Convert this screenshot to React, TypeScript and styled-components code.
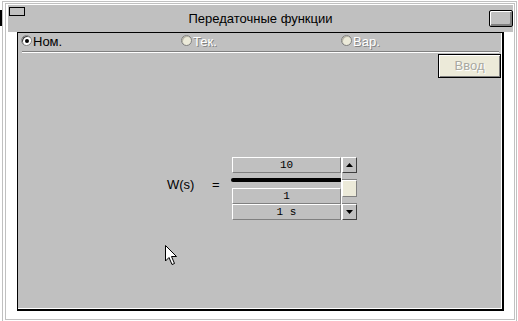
import React from 'react'
import styled, { createGlobalStyle } from 'styled-components'

const GRAY = '#c0c0c0'
const DARK = '#808080'
const BEIGE = '#ecead9'

const GlobalStyle = createGlobalStyle`
  html, body {
    margin: 0;
    padding: 0;
    background: #fff;
  }
  * {
    box-sizing: border-box;
  }
`

const Screen = styled.div`
  position: relative;
  width: 518px;
  height: 321px;
  padding-top: 1px;
  display: flex;
  background: #fff;
  font-family: "Liberation Sans", Arial, sans-serif;
  overflow: hidden;
`

const LeftTab = styled.div`
  width: 2px;
  height: 16px;
  margin-top: 9px;
  background: #000;
`

const Frame = styled.div`
  width: 515px;
  height: 320px;
  border: 1px solid ${GRAY};
  border-bottom: none;
  padding: 1px 1px 0 2px;
`

const Inner = styled.div`
  width: 510px;
  height: 317px;
  border: 1px solid ${GRAY};
  padding: 1px 1px 0 2px;
  display: flex;
  flex-direction: column;
`

const TitleBar = styled.div`
  height: 27px;
  background: ${GRAY};
  display: grid;
  grid-template-columns: 1fr auto 1fr;
  align-items: center;
`

const SysIcon = styled.div`
  justify-self: start;
  align-self: start;
  margin: 2px 0 0 1px;
  width: 16px;
  height: 9px;
  border: 1px solid #000;
`

const Title = styled.div`
  font-size: 13px;
  color: #000;
  padding-bottom: 1px;
`

const MaxButton = styled.div`
  justify-self: end;
  align-self: start;
  margin-top: 5px;
  width: 24px;
  height: 17px;
  background: ${GRAY};
  border: 1px solid #000;
  border-radius: 2px;
  box-shadow: inset 1px 1px 0 #fff, inset -2px -2px 0 ${DARK};
`

const Body = styled.div`
  flex: 1;
  padding-left: 9px;
`

const Panel = styled.div`
  width: 487px;
  height: 279px;
  background: ${GRAY};
  border: 1px solid #000;
  border-right-width: 2px;
  border-bottom-width: 2px;
  box-shadow: inset -1px -1px 0 #fff;
  display: flex;
  flex-direction: column;
`

const RadioRow = styled.div`
  height: 18px;
  padding-left: 3px;
  display: grid;
  grid-template-columns: 160px 160px 160px;
`

const RadioItem = styled.label<{ disabled?: boolean }>`
  display: flex;
  align-items: flex-start;
  gap: 1px;
  font-size: 13px;
  line-height: 18px;
  color: ${({ disabled }) => (disabled ? '#fff' : '#000')};
  text-shadow: ${({ disabled }) => (disabled ? `1px 1px 0 ${DARK}` : 'none')};
`

const RadioDot = styled.span<{ checked?: boolean; disabled?: boolean }>`
  position: relative;
  flex: none;
  width: 11px;
  height: 11px;
  margin-top: 2px;
  border-radius: 50%;
  background: ${({ disabled }) => (disabled ? BEIGE : '#fff')};
  border: 1px solid ${DARK};
  box-shadow: inset 1px 1px 0 ${({ disabled }) => (disabled ? '#b8b6a8' : '#404040')};

  &::after {
    content: '';
    display: ${({ checked }) => (checked ? 'block' : 'none')};
    position: absolute;
    left: 3px;
    top: 3px;
    width: 4px;
    height: 4px;
    border-radius: 50%;
    background: #000;
  }
`

const Separator = styled.div`
  margin: 0 3px 0 4px;
  border-top: 1px solid ${DARK};
  border-bottom: 1px solid #fff;
`

const ButtonRow = styled.div`
  margin-top: 1px;
  padding-right: 1px;
  display: flex;
  justify-content: flex-end;
`

const EnterButton = styled.button`
  width: 63px;
  height: 24px;
  padding: 0 0 2px;
  background: ${BEIGE};
  border: 1px solid #000;
  box-shadow: inset 1px 1px 0 #fff, inset -1px -1px 0 ${DARK};
  font-family: "Liberation Sans", Arial, sans-serif;
  font-size: 13px;
  color: #a8a8a0;
  text-shadow: 1px 1px 0 #fff;
`

const FormulaRow = styled.div`
  margin-top: 79px;
  padding-left: 149px;
  display: grid;
  grid-template-columns: 45px 19px 110px 16px;
  align-items: start;
`

const Label = styled.div`
  margin-top: 20px;
  font-size: 13px;
  color: #000;
`

const Fraction = styled.div`
  display: flex;
  flex-direction: column;
`

const ValueBox = styled.div<{ gapTop?: number }>`
  margin: ${({ gapTop }) => gapTop || 0}px 0 0 1px;
  width: 109px;
  height: 16px;
  background: ${GRAY};
  border-top: 1px solid #fff;
  border-left: 1px solid #fff;
  border-right: 1px solid ${DARK};
  border-bottom: 1px solid ${DARK};
  font-family: "Liberation Mono", "Courier New", monospace;
  font-size: 11px;
  line-height: 14px;
  text-align: center;
  color: #000;
  white-space: pre;
`

const Bar = styled.div`
  margin-top: 5px;
  width: 111px;
  height: 4px;
  background: #000;
  border-radius: 2px;
`

const ScrollBar = styled.div`
  width: 16px;
  height: 63px;
  display: flex;
  flex-direction: column;
  background: ${GRAY};
  border-left: 1px solid #fff;
`

const ArrowBtn = styled.div`
  height: 16px;
  display: flex;
  align-items: center;
  justify-content: center;
  background: ${GRAY};
  border-top: 1px solid #fff;
  border-left: 1px solid #fff;
  border-right: 1px solid #404040;
  border-bottom: 1px solid #404040;
`

const Track = styled.div<{ size: number }>`
  height: ${({ size }) => size}px;
  background: ${GRAY};
  border-bottom: 1px solid ${DARK};
`

const Thumb = styled.div`
  height: 17px;
  background: ${BEIGE};
  border-top: 1px solid #fff;
  border-left: 1px solid #fff;
  border-right: 1px solid ${DARK};
  border-bottom: 1px solid ${DARK};
`

const Cursor = styled.svg`
  position: absolute;
  left: 164px;
  top: 244px;
`

const Triangle = ({ down }: { down?: boolean }) => (
  <svg width="7" height="4" viewBox="0 0 7 4">
    <polygon points={down ? '0,0 7,0 3.5,4' : '3.5,0 7,4 0,4'} fill="#000" />
  </svg>
)

export default function App() {
  return (
    <Screen>
      <GlobalStyle />
      <LeftTab />
      <Frame>
        <Inner>
          <TitleBar>
            <SysIcon />
            <Title>Передаточные функции</Title>
            <MaxButton />
          </TitleBar>
          <Body>
            <Panel>
              <RadioRow>
                <RadioItem>
                  <RadioDot checked />
                  Ном.
                </RadioItem>
                <RadioItem disabled>
                  <RadioDot disabled />
                  Тек.
                </RadioItem>
                <RadioItem disabled>
                  <RadioDot disabled />
                  Вар.
                </RadioItem>
              </RadioRow>
              <Separator />
              <ButtonRow>
                <EnterButton disabled>Ввод</EnterButton>
              </ButtonRow>
              <FormulaRow>
                <Label>W(s)</Label>
                <Label>=</Label>
                <Fraction>
                  <ValueBox>10</ValueBox>
                  <Bar />
                  <ValueBox gapTop={6}>1</ValueBox>
                  <ValueBox>{'1 s'}</ValueBox>
                </Fraction>
                <ScrollBar>
                  <ArrowBtn>
                    <Triangle />
                  </ArrowBtn>
                  <Track size={7} />
                  <Thumb />
                  <Track size={7} />
                  <ArrowBtn>
                    <Triangle down />
                  </ArrowBtn>
                </ScrollBar>
              </FormulaRow>
            </Panel>
          </Body>
        </Inner>
      </Frame>
      <Cursor width="16" height="24" viewBox="0 0 16 24">
        <path d="M1.5 1.5 L1.5 17 L5 13.5 L8 20.5 L10.5 19.5 L7.5 12.5 L12.5 12.5 Z" fill="#fff" stroke="#000" strokeWidth="1" />
      </Cursor>
    </Screen>
  )
}
